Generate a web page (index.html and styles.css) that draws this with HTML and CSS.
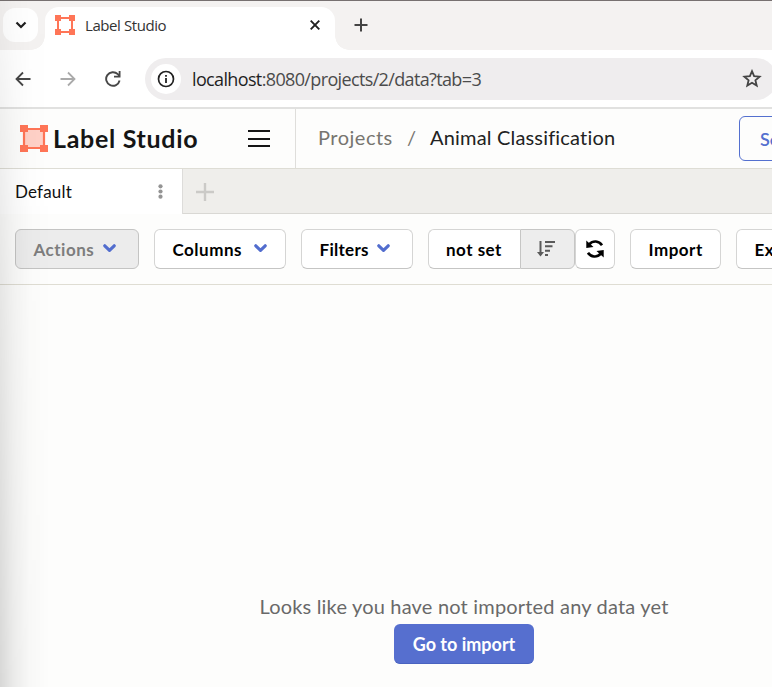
FILE: index.html
```html
<!DOCTYPE html>
<html lang="en">
<head>
<meta charset="utf-8">
<title>Label Studio</title>
<link rel="stylesheet" href="styles.css">
</head>
<body>
<div class="window">
  <div class="tabstrip">
    <div class="tab-search"><svg width="12" height="8" viewBox="0 0 12 8"><path d="M1.500 1.500 6 6l4.500-4.500" fill="none" stroke="#1f1f1f" stroke-width="2.200"/></svg></div>
    <div class="browser-tab">
      <svg class="favicon" width="20" height="20" viewBox="0 0 20 20"><path d="M3 3h14v14H3z" fill="none" stroke="#ff7557" stroke-width="2"/><path d="M0 0h6v6H0zM14 0h6v6h-6zM0 14h6v6H0zM14 14h6v6h-6z" fill="#ff7557"/></svg>
      <span class="tab-title">Label Studio</span>
      <svg class="close" width="10" height="10" viewBox="0 0 10 10"><path d="m.7.7 8.600 8.600m0-8.600L.7 9.300" stroke="#1f1f1f" stroke-width="1.900"/></svg>
    </div>
    <svg class="new-tab" width="14" height="14" viewBox="0 0 14 14"><path d="M7 .5v13M.5 7h13" stroke="#444" stroke-width="2"/></svg>
  </div>
  <div class="navbar">
    <svg class="nav-back" width="16" height="16" viewBox="0 0 16 16"><path d="M15.500 8H1.500M8 1.500 1.500 8 8 14.500" fill="none" stroke="#474747" stroke-width="1.800"/></svg>
    <svg class="nav-forward" width="16" height="16" viewBox="0 0 16 16"><path d="M.5 8h14M8 1.500 14.500 8 8 14.500" fill="none" stroke="#aaa" stroke-width="1.800"/></svg>
    <svg class="nav-reload" width="16" height="16" viewBox="0 0 16 16"><path d="M14.600 9.500A6.800 6.800 0 1 1 12.800 3.200L14.500 5" fill="none" stroke="#474747" stroke-width="1.900"/><path d="M15.500 0v6.500H9V4.700h4.700V0z" fill="#474747"/></svg>
    <div class="address">
      <div class="site-info"><svg width="18" height="18" viewBox="0 0 18 18"><circle cx="9" cy="9" r="7.500" fill="none" stroke="#222" stroke-width="1.700"/><path d="M9 8v5M9 5v1.800" stroke="#222" stroke-width="1.800"/></svg></div>
      <span class="url"><b>localhost</b>:8080/projects/2/data?tab=3</span>
      <svg class="star" width="20" height="19" viewBox="0 0 20 19"><path d="m10 2.200 2.100 5 5.500.5-4.200 3.600 1.300 5.300-4.700-2.800-4.700 2.800 1.300-5.300-4.200-3.600 5.500-.5z" fill="none" stroke="#444" stroke-width="1.800"/></svg>
    </div>
  </div>
  <header class="app-header">
    <div class="brand">
      <svg class="logo" width="28" height="27" viewBox="0 0 28 27"><path d="M4 4h20v19H4z" fill="#ffd1c7" stroke="#ff7557" stroke-width="2.200"/><path d="M0 0h8v7H0zM20 0h8v7h-8zM0 20h8v7H0zM20 20h8v7h-8z" fill="#ff7557"/></svg>
      <span class="brand-name">Label Studio</span>
      <div class="hamburger"><i></i><i></i><i></i></div>
    </div>
    <nav class="crumbs"><span class="crumb">Projects</span><span class="slash">/</span><span class="current">Animal Classification</span></nav>
    <div class="settings"><span>Settings</span></div>
  </header>
  <div class="view-tabs">
    <div class="view-tab"><span class="view-name">Default</span><svg width="5" height="15" viewBox="0 0 5 15"><g fill="#949494"><circle cx="2.500" cy="2.300" r="2.100"/><circle cx="2.500" cy="7.500" r="2.100"/><circle cx="2.500" cy="12.700" r="2.100"/></g></svg></div>
    <svg class="add-view" width="18" height="18" viewBox="0 0 18 18"><path d="M9 0v18M0 9h18" stroke="#cbcac7" stroke-width="2.400"/></svg>
  </div>
  <div class="toolbar">
    <div class="btn actions"><span class="label">Actions</span><svg class="chev" width="13" height="9" viewBox="0 0 13 9"><path d="m1.800 1.800 4.700 4.500 4.700-4.500" /></svg></div>
    <div class="btn columns"><span class="label">Columns</span><svg class="chev" width="13" height="9" viewBox="0 0 13 9"><path d="m1.800 1.800 4.700 4.500 4.700-4.500" /></svg></div>
    <div class="btn filters"><span class="label">Filters</span><svg class="chev" width="13" height="9" viewBox="0 0 13 9"><path d="m1.800 1.800 4.700 4.500 4.700-4.500" /></svg></div>
    <div class="group">
      <div class="btn order"><span class="label">not set</span></div>
      <div class="btn sort"><svg width="18" height="16" viewBox="0 0 18 16"><path d="M3.500 0v13M8 1h10M8 5.300h7.500M8 9.700h5M8 14h3" fill="none" stroke="#5a5a5a" stroke-width="2"/><path d="M0 11h7l-3.500 4.500z" fill="#5a5a5a"/></svg></div>
      <div class="btn refresh"><svg width="18" height="18" viewBox="0 0 18 18"><path d="M3.200 4.300C7 .1 13 .6 16 5.200M14.800 13.700C11 17.900 5 17.400 2 12.800" fill="none" stroke="#000" stroke-width="2.600"/><path d="M.3.5V8l7.200-1zM17.700 17.500V10l-7.200 1z" fill="#000"/></svg></div>
    </div>
    <div class="btn import"><span class="label">Import</span></div>
    <div class="btn export"><span class="label">Export</span></div>
  </div>
  <main class="empty">
    <p class="message">Looks like you have not imported any data yet</p>
    <div class="go"><span>Go to import</span></div>
  </main>
  <div class="edge-shade"></div>
</div>
</body>
</html>
```

FILE: styles.css
```css
* { box-sizing: border-box; }
body { margin: 0; background: #fdfdfc; font-family: Lato, "Liberation Sans", sans-serif; font-variant-ligatures: none; }
svg { display: block; flex: none; }
.window { position: relative; width: 772px; height: 687px; overflow: hidden; display: flex; flex-direction: column; }
.window > * { flex: none; }
span { white-space: nowrap; }

.tabstrip { height: 50px; border-top: 1px solid #777171; background: #f4f2f1; display: flex; }
.tab-search { width: 35px; height: 34px; margin: 7px 7px 0 3px; border-radius: 12px; background: #fff; display: flex; align-items: center; justify-content: center; }
.browser-tab { position: relative; width: 290px; height: 43px; margin-top: 6px; padding: 0 15px 7px 10px; border-radius: 14px 14px 0 0; background: #fff; display: flex; align-items: center; }
.browser-tab::before, .browser-tab::after { content: ""; position: absolute; bottom: 0; width: 14px; height: 14px; }
.browser-tab::before { left: -14px; background: radial-gradient(circle at 0 0, transparent 13.500px, #fff 14px); }
.browser-tab::after { right: -14px; background: radial-gradient(circle at 100% 0, transparent 13.500px, #fff 14px); }
.tab-title { margin-left: 10px; font: 15px "Open Sans", sans-serif; letter-spacing: -.42px; color: #333; }
.close { margin-left: auto; }
.new-tab { margin: 17px 0 0 19px; }

.navbar { height: 59px; background: #fff; border-bottom: 2px solid #e1e1e0; display: flex; align-items: center; }
.nav-back { margin-left: 15px; }
.nav-forward { margin-left: 29px; }
.nav-reload { margin-left: 29px; }
.address { width: 632px; height: 42px; margin-left: 24px; border-radius: 21px; background: #efedee; display: flex; align-items: center; flex: none; }
.site-info { width: 30px; height: 30px; margin-left: 6px; border-radius: 50%; background: #fff; display: flex; align-items: center; justify-content: center; }
.url { margin-left: 11px; font: 18px "Open Sans", sans-serif; letter-spacing: -.64px; color: #4b4b4b; }
.url b { font-weight: 400; color: #1f1f1f; }
.star { margin: 0 15px 0 auto; }

.app-header { height: 60px; border-bottom: 1px solid #deddd5; display: flex; overflow: hidden; }
.brand { flex: none; width: 296px; border-right: 1px solid #dfdedb; padding-left: 20px; display: flex; align-items: center; }
.brand-name { width: 144px; margin: -2px 0 0 5px; font-size: 25px; font-weight: 700; letter-spacing: .7px; color: #151515; }
.hamburger { width: 22px; height: 17px; margin-left: 51px; display: flex; flex-direction: column; justify-content: space-between; }
.hamburger i { height: 2px; background: #151515; }
.crumbs { flex: none; width: 443px; padding: 0 0 3px 22px; display: flex; align-items: center; font-size: 20px; color: #77756f; }
.crumb { width: 74px; letter-spacing: .5px; }
.slash { width: 8px; margin: 0 15px; }
.current { letter-spacing: .18px; color: #222; }
.settings { flex: none; width: 110px; height: 45px; margin-top: 7px; border: 1px solid #5470cf; border-radius: 6px; padding-left: 20px; display: flex; align-items: center; font-size: 18px; font-weight: 600; color: #5470cf; }

.view-tabs { height: 45px; background: #efeeeb; border-bottom: 1px solid #d9d8d4; display: flex; }
.view-tab { width: 183px; height: 45px; background: #fff; border-right: 1px solid #dddcda; padding: 0 19px 0 15px; display: flex; align-items: center; justify-content: space-between; }
.view-name { font-size: 17px; letter-spacing: .2px; color: #111; }
.add-view { margin: 14px 0 0 13px; }

.toolbar { height: 71px; border-bottom: 1px solid #dfddd3; padding: 15px 0 0 15px; display: flex; gap: 15px; }
.btn { flex: none; height: 40px; border: 1px solid #d5d5d4; border-bottom-color: #c5c5c4; border-radius: 6px; background: #fff; display: flex; align-items: center; font-size: 17px; font-weight: 700; letter-spacing: .5px; color: #000; padding-left: 17.500px; }
.actions { width: 124px; background: #ececec; border-color: #c4c4c3; color: #7d7d7d; }
.columns { width: 132px; }
.filters { width: 112px; letter-spacing: .3px; }
.chev { fill: none; stroke: #526dce; stroke-width: 3.200; stroke-linecap: round; stroke-linejoin: round; }
.btn .chev { margin: -1px 22px 0 auto; }
.columns .chev { margin-right: 18px; }
.group { display: flex; }
.order { width: 92px; border-right: 0; border-radius: 6px 0 0 6px; padding-left: 17px; }
.sort { width: 55px; background: #ededed; border-color: #c6c6c5; border-radius: 0 6px 6px 0; padding-left: 16px; }
.refresh { width: 40px; padding: 0; justify-content: center; }
.import { width: 91px; }
.export { width: 100px; }

.empty { width: 928px; display: flex; flex-direction: column; align-items: center; padding-top: 309px; }
.message { margin: 0; height: 30px; font-size: 20px; line-height: 24px; letter-spacing: .19px; color: #696969; white-space: nowrap; }
.go { width: 140px; height: 40px; border-radius: 6px; background: #566fcf; border-bottom: 1px solid #4963c0; display: flex; align-items: center; justify-content: center; font-size: 18px; font-weight: 700; color: #fff; }
.edge-shade { position: absolute; left: 0; top: 0; width: 50px; height: 687px; background: linear-gradient(90deg, rgba(0,0,0,.15), rgba(0,0,0,.07) 28%, rgba(0,0,0,.02) 60%, transparent); -webkit-mask-image: linear-gradient(rgba(0,0,0,.2), rgba(0,0,0,.6) 40%, #000); mask-image: linear-gradient(rgba(0,0,0,.2), rgba(0,0,0,.6) 40%, #000); }
```
